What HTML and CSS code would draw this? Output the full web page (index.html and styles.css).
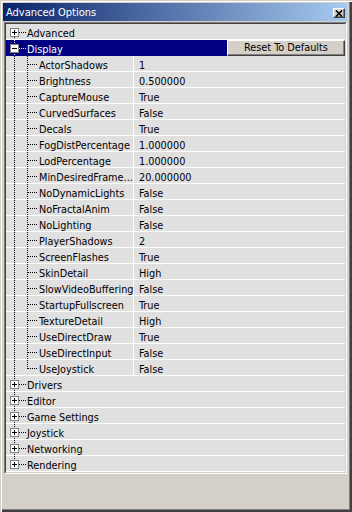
FILE: index.html
```html
<!DOCTYPE HTML>
<html lang=en>
	<head>
		<meta charset="UTF-8">
		<link rel="stylesheet" href="styles.css">
	</head>
	<body>
		<div class="window">
			<div class="titlebar">
				<span class="title">Advanced Options</span>
				<span class="close"><svg width="8" height="7" viewBox="0 0 8 7"><path d="M1 0.5 L7 6.5 M7 0.5 L1 6.5" stroke="#000" stroke-width="1.6" fill="none"/></svg></span>
			</div>
			<div class="panel">
				<div class="tree">
					<div class="row top first"><span class="gut"><span class="box plus"></span></span><span class="name">Advanced</span></div>
					<div class="row top open"><span class="gut"><span class="box"></span></span><span class="name">Display</span><button class="reset">Reset To Defaults</button></div>
					<div class="row prop"><span class="gut"></span><span class="name">ActorShadows</span><span class="val">1</span></div>
					<div class="row prop"><span class="gut"></span><span class="name">Brightness</span><span class="val">0.500000</span></div>
					<div class="row prop"><span class="gut"></span><span class="name">CaptureMouse</span><span class="val">True</span></div>
					<div class="row prop"><span class="gut"></span><span class="name">CurvedSurfaces</span><span class="val">False</span></div>
					<div class="row prop"><span class="gut"></span><span class="name">Decals</span><span class="val">True</span></div>
					<div class="row prop"><span class="gut"></span><span class="name">FogDistPercentage</span><span class="val">1.000000</span></div>
					<div class="row prop"><span class="gut"></span><span class="name">LodPercentage</span><span class="val">1.000000</span></div>
					<div class="row prop"><span class="gut"></span><span class="name">MinDesiredFrame...</span><span class="val">20.000000</span></div>
					<div class="row prop"><span class="gut"></span><span class="name">NoDynamicLights</span><span class="val">False</span></div>
					<div class="row prop"><span class="gut"></span><span class="name">NoFractalAnim</span><span class="val">False</span></div>
					<div class="row prop"><span class="gut"></span><span class="name">NoLighting</span><span class="val">False</span></div>
					<div class="row prop"><span class="gut"></span><span class="name">PlayerShadows</span><span class="val">2</span></div>
					<div class="row prop"><span class="gut"></span><span class="name">ScreenFlashes</span><span class="val">True</span></div>
					<div class="row prop"><span class="gut"></span><span class="name">SkinDetail</span><span class="val">High</span></div>
					<div class="row prop"><span class="gut"></span><span class="name">SlowVideoBuffering</span><span class="val">False</span></div>
					<div class="row prop"><span class="gut"></span><span class="name">StartupFullscreen</span><span class="val">True</span></div>
					<div class="row prop"><span class="gut"></span><span class="name">TextureDetail</span><span class="val">High</span></div>
					<div class="row prop"><span class="gut"></span><span class="name">UseDirectDraw</span><span class="val">True</span></div>
					<div class="row prop"><span class="gut"></span><span class="name">UseDirectInput</span><span class="val">False</span></div>
					<div class="row prop last"><span class="gut"></span><span class="name">UseJoystick</span><span class="val">False</span></div>
					<div class="row top"><span class="gut"><span class="box plus"></span></span><span class="name">Drivers</span></div>
					<div class="row top"><span class="gut"><span class="box plus"></span></span><span class="name">Editor</span></div>
					<div class="row top"><span class="gut"><span class="box plus"></span></span><span class="name">Game Settings</span></div>
					<div class="row top"><span class="gut"><span class="box plus"></span></span><span class="name">Joystick</span></div>
					<div class="row top"><span class="gut"><span class="box plus"></span></span><span class="name">Networking</span></div>
					<div class="row top last"><span class="gut"><span class="box plus"></span></span><span class="name">Rendering</span></div>
				</div>
			</div>
		</div>
	</body>
</html>
```

FILE: styles.css
```css
html {
	font-family: "DejaVu Sans Condensed", "Liberation Sans", sans-serif;
	font-size: 10.8px;
}
body { margin: 0; }

:root {
	--dot-v: repeating-linear-gradient(to bottom, #000 0 1px, transparent 1px 2px);
	--dot-h: repeating-linear-gradient(to right, #000 0 1px, transparent 1px 2px);
	--dot-vw: repeating-linear-gradient(to bottom, #fff 0 1px, transparent 1px 2px);
	--dot-hw: repeating-linear-gradient(to right, #fff 0 1px, transparent 1px 2px);
}

.window {
	box-sizing: border-box;
	width: 352px;
	height: 512px;
	padding: 3px 5px 3px 3px;
	background: #d4d0c8;
	box-shadow: inset 1px 1px #d4d0c8, inset 2px 2px #fff, inset -2px -2px #404040, inset -3px -3px #808080;
}

/* caption */
.titlebar {
	height: 18px;
	display: flex;
	background: linear-gradient(to right, #0a246a, #a6caf0);
	color: #fff;
}
.title {
	flex: 1;
	padding: 3px 0 0 3px;
	line-height: 13px;
	font-size: 11px;
}
.close {
	box-sizing: border-box;
	width: 12px;
	height: 10px;
	margin: 5px 2px 0 0;
	display: flex;
	align-items: center;
	justify-content: center;
	background: #d4d0c8;
	border: 1px solid;
	border-color: #fff #404040 #404040 #fff;
	box-shadow: inset -1px -1px #808080;
}

/* sunken list */
.panel {
	box-sizing: border-box;
	width: 343px;
	margin: 1px 0 0 1px;
	border: 1px solid;
	border-color: #808080 #fff #fff #808080;
}
.tree {
	height: 448px;
	border: 1px solid;
	border-color: #404040 #d4d0c8 #d4d0c8 #404040;
	background: #e0e0e0;
}

.row {
	display: flex;
	height: 15px;
	border-bottom: 1px solid #fff;
}
.gut {
	flex: none;
	width: 21px;
	background-repeat: no-repeat;
}
.name, .val {
	padding-top: 3px;
	line-height: 13px;
	white-space: nowrap;
}
.val { padding-left: 5px; }

/* tree lines */
.top .gut {
	background-image: var(--dot-h), var(--dot-v);
	background-position: 13px 8px, 8px 0;
	background-size: 7px 1px, 1px 100%;
}
.top.first .gut { background-position: 13px 8px, 8px 13px; background-size: 7px 1px, 1px 2px; }
.top.last .gut { background-size: 7px 1px, 1px 4px; }

.prop .gut {
	width: 33px;
	background-image: var(--dot-v), var(--dot-v), var(--dot-h);
	background-position: 8px 0, 21px 0, 22px 8px;
	background-size: 1px 100%, 1px 100%, 10px 1px;
}
.prop.last .gut { background-size: 1px 100%, 1px 9px, 10px 1px; }
.prop .name {
	width: 94px;
	border-right: 1px solid #fff;
}

.box {
	display: block;
	box-sizing: border-box;
	width: 9px;
	height: 9px;
	margin: 4px 0 0 4px;
	border: 1px solid #808080;
	background: linear-gradient(#000, #000) center / 5px 1px no-repeat, #fff;
}
.box.plus {
	background: linear-gradient(#000, #000) center / 5px 1px no-repeat, linear-gradient(#000, #000) center / 1px 5px no-repeat, #fff;
}

/* selected category */
.open {
	height: 16px;
	border-bottom: none;
	background: #000080;
}
.open .gut {
	background-image: var(--dot-hw), var(--dot-vw);
}
.open .name {
	flex: 1;
	color: #fff;
}
.reset {
	flex: none;
	box-sizing: border-box;
	width: 118px;
	height: 16px;
	margin: 0;
	padding: 0;
	font: inherit;
	line-height: 14px;
	color: #000;
	background: #d4d0c8;
	border: 1px solid;
	border-color: #fff #404040 #404040 #fff;
	box-shadow: inset -1px -1px #808080;
}
```
